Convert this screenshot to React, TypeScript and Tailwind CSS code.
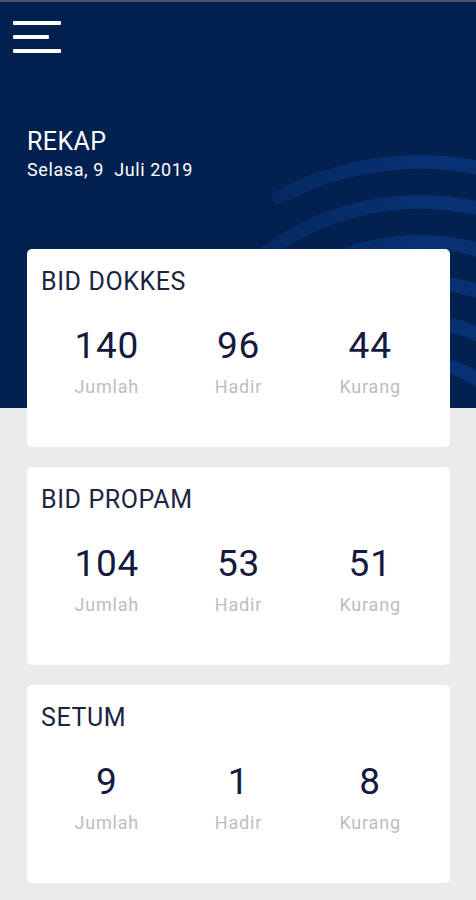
const stats = [
  { name: "BID DOKKES", jumlah: 140, hadir: 96, kurang: 44 },
  { name: "BID PROPAM", jumlah: 104, hadir: 53, kurang: 51 },
  { name: "SETUM", jumlah: 9, hadir: 1, kurang: 8 },
];

function Arcs() {
  const cx = 420;
  const cy = 460;
  const rings = [
    { r: 300, from: -118 },
    { r: 260, from: -127 },
    { r: 220, from: -140 },
    { r: 180, from: -150 },
    { r: 140, from: -160 },
    { r: 100, from: -170 },
  ];
  const pt = (r: number, deg: number) => {
    const a = (deg * Math.PI) / 180;
    return `${(cx + r * Math.cos(a)).toFixed(1)} ${(cy + r * Math.sin(a)).toFixed(1)}`;
  };
  return (
    <svg className="absolute left-0 top-0" width="476" height="408" viewBox="0 0 476 408">
      <defs>
        <linearGradient id="fade" x1="250" y1="0" x2="420" y2="0" gradientUnits="userSpaceOnUse">
          <stop offset="0" stopColor="#0a3a84" stopOpacity="0.3" />
          <stop offset="1" stopColor="#0a3a84" stopOpacity="0.65" />
        </linearGradient>
      </defs>
      {rings.map((ring) => (
        <path
          key={ring.r}
          d={`M ${pt(ring.r, ring.from)} A ${ring.r} ${ring.r} 0 0 1 ${pt(ring.r, 0)}`}
          fill="none"
          stroke="url(#fade)"
          strokeWidth="14"
          strokeLinecap="round"
        />
      ))}
    </svg>
  );
}

function StatCard({ name, jumlah, hadir, kurang }: (typeof stats)[number]) {
  const cols = [
    { value: jumlah, label: "Jumlah" },
    { value: hadir, label: "Hadir" },
    { value: kurang, label: "Kurang" },
  ];
  return (
    <div className="h-[198px] bg-white rounded-[5px] px-[14px] pt-[18px]">
      <div className="text-[25px] leading-[30px] tracking-[0.6px] text-[#1b2440]">{name}</div>
      <div className="grid grid-cols-3 mt-[28px]">
        {cols.map((c) => (
          <div key={c.label} className="flex flex-col items-center">
            <span className="text-[37px] leading-[42px] tracking-[0.8px] text-[#14193d]">{c.value}</span>
            <span className="text-[18px] leading-[22px] tracking-[0.8px] mt-[9px] text-[#bdbdbd]">{c.label}</span>
          </div>
        ))}
      </div>
    </div>
  );
}

export default function App() {
  return (
    <div className="min-h-[900px] bg-[#ebebeb] font-['Roboto',sans-serif]">
      <header className="relative h-[408px] overflow-hidden bg-[#022050] border-t-2 border-[#4a5778]">
        <Arcs />
        <div className="relative pl-[13px] pt-[19px] flex flex-col gap-[10px]">
          <span className="block h-[4px] w-[48px] bg-white rounded-[1px]" />
          <span className="block h-[4px] w-[36px] bg-white rounded-[1px]" />
          <span className="block h-[4px] w-[48px] bg-white rounded-[1px]" />
        </div>
        <div className="relative pl-[27px] mt-[75px] text-white">
          <div className="text-[25px] leading-[28px] tracking-[0.4px]">REKAP</div>
          <div className="text-[18px] leading-[20px] tracking-[0.6px] mt-[4px] whitespace-pre">Selasa, 9  Juli 2019</div>
        </div>
      </header>
      <main className="relative -mt-[159px] ml-[27px] mr-[26px] flex flex-col gap-5 pb-4">
        {stats.map((s) => (
          <StatCard key={s.name} {...s} />
        ))}
      </main>
    </div>
  );
}
